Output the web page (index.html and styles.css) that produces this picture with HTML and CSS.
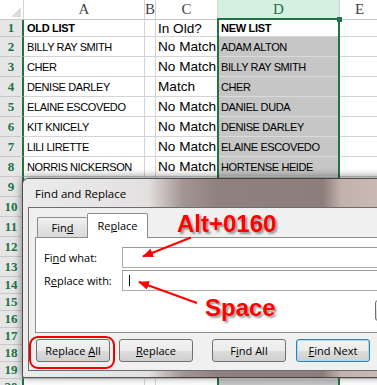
FILE: index.html
```html
<!DOCTYPE html>
<html>
<head>
<meta charset="utf-8">
<link rel="stylesheet" href="styles.css">
</head>
<body>
<div class="sheet">
  <div class="corner"><span class="tri"></span></div>
  <div class="ch">A</div><div class="ch">B</div><div class="ch">C</div><div class="ch ch-sel">D</div><div class="ch">E</div>

  <div class="rh">1</div><div class="c b">OLD LIST</div><div class="c"></div><div class="c cc">In Old?</div><div class="c d1 b">NEW LIST</div><div class="c"></div>
  <div class="rh">2</div><div class="c">BILLY RAY SMITH</div><div class="c"></div><div class="c cc">No Match</div><div class="c d">ADAM ALTON</div><div class="c"></div>
  <div class="rh">3</div><div class="c">CHER</div><div class="c"></div><div class="c cc">No Match</div><div class="c d">BILLY RAY SMITH</div><div class="c"></div>
  <div class="rh">4</div><div class="c">DENISE DARLEY</div><div class="c"></div><div class="c cc">Match</div><div class="c d">CHER</div><div class="c"></div>
  <div class="rh">5</div><div class="c">ELAINE ESCOVEDO</div><div class="c"></div><div class="c cc">No Match</div><div class="c d">DANIEL DUDA</div><div class="c"></div>
  <div class="rh">6</div><div class="c">KIT KNICELY</div><div class="c"></div><div class="c cc">No Match</div><div class="c d">DENISE DARLEY</div><div class="c"></div>
  <div class="rh">7</div><div class="c">LILI LIRETTE</div><div class="c"></div><div class="c cc">No Match</div><div class="c d">ELAINE ESCOVEDO</div><div class="c"></div>
  <div class="rh">8</div><div class="c">NORRIS NICKERSON</div><div class="c"></div><div class="c cc">No Match</div><div class="c d">HORTENSE HEIDE</div><div class="c"></div>
  <div class="rh">9</div><div class="c"></div><div class="c"></div><div class="c"></div><div class="c d"></div><div class="c"></div>
  <div class="rh">10</div><div class="c"></div><div class="c"></div><div class="c"></div><div class="c d"></div><div class="c"></div>
  <div class="rh">11</div><div class="c"></div><div class="c"></div><div class="c"></div><div class="c d"></div><div class="c"></div>
  <div class="rh">12</div><div class="c"></div><div class="c"></div><div class="c"></div><div class="c d"></div><div class="c"></div>
  <div class="rh">13</div><div class="c"></div><div class="c"></div><div class="c"></div><div class="c d"></div><div class="c"></div>
  <div class="rh">14</div><div class="c"></div><div class="c"></div><div class="c"></div><div class="c d"></div><div class="c"></div>
  <div class="rh">15</div><div class="c"></div><div class="c"></div><div class="c"></div><div class="c d"></div><div class="c"></div>
  <div class="rh">16</div><div class="c"></div><div class="c"></div><div class="c"></div><div class="c d"></div><div class="c"></div>
  <div class="rh">17</div><div class="c"></div><div class="c"></div><div class="c"></div><div class="c d"></div><div class="c"></div>
  <div class="rh">18</div><div class="c"></div><div class="c"></div><div class="c"></div><div class="c d"></div><div class="c"></div>
  <div class="rh">19</div><div class="c"></div><div class="c"></div><div class="c"></div><div class="c d"></div><div class="c"></div>
  <div class="rh">20</div><div class="c"></div><div class="c"></div><div class="c"></div><div class="c d"></div><div class="c"></div>
</div>

<div class="sel"></div>
<div class="handle"></div>

<div class="dialog">
  <div class="title">Find and Replace</div>
  <div class="client">
    <div class="tabs">
      <div class="tab tab-find"><span>Fin<u>d</u></span></div>
      <div class="tab tab-on"><span>Re<u>p</u>lace</span></div>
    </div>
    <div class="panel">
      <div class="fields">
        <div class="lbl">Fi<u>n</u>d what:</div>
        <div class="box"></div>
        <div class="lbl">R<u>e</u>place with:</div>
        <div class="box"><span class="caret"></span></div>
      </div>
      <div class="optrow"><div class="btn btn-opt" title="Options"></div></div>
    </div>
    <div class="btnrow">
      <div class="btn"><span>Replace <u>A</u>ll</span></div>
      <div class="btn btn-r"><span><u>R</u>eplace</span></div>
      <div class="btn btn-fa"><span>F<u>i</u>nd All</span></div>
      <div class="btn btn-def"><span><u>F</u>ind Next</span></div>
    </div>
  </div>
</div>

<div class="note note-alt">Alt+0160</div>
<div class="note note-space">Space</div>
<div class="ring"></div>

<svg class="arrows" width="377" height="385" viewBox="0 0 377 385">
  <defs>
    <marker id="ah" markerWidth="11" markerHeight="9" refX="10" refY="4.5" orient="auto" markerUnits="userSpaceOnUse">
      <path d="M0,0 L11,4.5 L0,9 z" fill="#ff0000"/>
    </marker>
  </defs>
  <line x1="191" y1="237.5" x2="143" y2="256.5" stroke="#ff0000" stroke-width="2" marker-end="url(#ah)"/>
  <line x1="197" y1="303" x2="139" y2="282" stroke="#ff0000" stroke-width="2" marker-end="url(#ah)"/>
</svg>
</body>
</html>
```

FILE: styles.css
```css
* { box-sizing: border-box; margin: 0; padding: 0; }
html, body { width: 377px; height: 385px; overflow: hidden; background: #fff; }
body { position: relative; font-family: "Liberation Sans", Arial, sans-serif; }

/* ---------- spreadsheet ---------- */
.sheet {
  display: grid;
  grid-template-columns: 24px 121px 11px 62px 122px 40px;
  grid-template-rows: 20px 17px repeat(12, 20px) repeat(7, 17px);
}
.sheet > div {
  border-right: 1px solid #d4d4d4;
  border-bottom: 1px solid #d4d4d4;
  display: flex;
  align-items: center;
  white-space: nowrap;
  overflow: hidden;
}
.corner { position: relative; background: #fff; border-bottom-color: #c6c6c6 !important; }
.tri {
  position: absolute; right: 2px; bottom: 2px;
  width: 0; height: 0;
  border-left: 10px solid transparent;
  border-bottom: 10px solid #dcdcdc;
}
.ch {
  justify-content: center;
  font-family: "Liberation Serif", serif;
  font-size: 15px;
  color: #444;
  background: #fff;
  border-bottom-color: #c6c6c6 !important;
}
.ch-sel { background: #d3f0e0; color: #217346; }
.rh {
  justify-content: center;
  font-family: "Liberation Serif", serif;
  font-weight: bold;
  font-size: 13px;
  color: #217346;
  background: #e6e6e6;
  border-right: 2px solid #217346 !important;
  border-bottom-color: #c8c8c8 !important;
}
.c {
  padding-left: 3px;
  font-family: "Liberation Sans", Arial, sans-serif;
  font-size: 11px;
  letter-spacing: -0.4px;
  color: #000;
}
.cc { font-size: 13.6px; letter-spacing: 0; padding-left: 2px; }
.b { font-weight: bold; letter-spacing: -0.3px; }
.d { background: #c6c6c6; border-bottom-color: #dadada !important; }
.d1 { background: #fff; }

.sel {
  position: absolute; left: 217px; top: 18px; width: 123px; height: 380px;
  border: 2px solid #217346;
}
.handle { position: absolute; left: 337px; top: 17px; width: 5px; height: 5px; background: #217346; }

/* ---------- dialog ---------- */
.dialog {
  position: absolute; left: 22px; top: 178px; width: 430px; height: 200px;
  border: 1px solid rgba(40, 40, 40, 0.75);
  border-radius: 6px 6px 2px 2px;
  background: linear-gradient(90deg, #ebebeb 0px, #e3e0e0 125px, #a39592 160px, #8f817d 195px, #8c7e7a 300px, #c2b2ae 318px, #cab9b5 360px);
  padding: 0 0 6px 5px;
  display: flex; flex-direction: column;
  box-shadow: 0 -1px 9px rgba(0, 0, 0, 0.5);
}
.title {
  height: 28px; padding-left: 7px;
  display: flex; align-items: center;
  font-family: "Open Sans", sans-serif; font-size: 11.5px; color: #000;
}
.client {
  flex: 1;
  background: #f0f0f0;
  border: 1px solid #6d6d6d; border-right: none;
  padding: 5px 0 0 6px;
  font-family: "Open Sans", sans-serif; font-size: 11px; color: #000;
}
.tabs { display: flex; align-items: flex-end; padding-left: 2px; height: 24px; position: relative; z-index: 1; }
.tab {
  display: flex; align-items: center; justify-content: center;
  border: 1px solid #898c95; border-bottom: none;
  border-radius: 2px 2px 0 0;
}
.tab-find { width: 50px; height: 20px; background: linear-gradient(#f3f3f3, #e3e3e3 50%, #dadada); border-right: none; }
.tab-on { width: 61px; height: 25px; margin-bottom: -1px; background: #fff; padding-bottom: 2px; }
.panel {
  width: 430px; height: 96px;
  background: #fff;
  border: 1px solid #898c95; border-right: none;
}
.fields {
  display: grid; grid-template-columns: 78px 1fr;
  row-gap: 2px;
  padding: 9px 0 0 8px;
  align-items: center;
}
.box { height: 21px; border: 1px solid #abadb3; border-top-color: #9a9a9a; background: #fff; display: flex; align-items: center; }
.caret { width: 1px; height: 11px; background: #000; margin-left: 6px; }
.optrow { padding: 9px 0 0 339px; }
.btn {
  width: 74px; height: 23px;
  border: 1px solid #707070; border-radius: 3px;
  background: linear-gradient(#f2f2f2 0%, #ebebeb 50%, #dddddd 50%, #cfcfcf 100%);
  display: flex; align-items: center; justify-content: center;
  white-space: nowrap;
}
.btn-opt { width: 90px; height: 21px; }
.btnrow { display: flex; padding: 6px 0 0 1px; }
.btn-r { margin-left: 9px; }
.btn-fa { margin-left: 19px; }
.btn-def { margin-left: 10px; border-color: #3c7fb1; box-shadow: inset 0 0 0 1px #9fdcfb; }

/* ---------- annotations ---------- */
.note {
  position: absolute;
  font-family: "Liberation Sans", Arial, sans-serif;
  font-weight: bold; font-size: 24px; line-height: 24px;
  color: #ff0000;
  text-shadow: 2px 2px 2px rgba(60, 60, 60, 0.5);
  white-space: nowrap;
}
.note-alt { left: 177px; top: 212px; }
.note-space { left: 205px; top: 296px; }
.ring {
  position: absolute; left: 29px; top: 336px; width: 86px; height: 33px;
  border: 2px solid #ee0000; border-radius: 9px;
}
.arrows { position: absolute; left: 0; top: 0; }
```
